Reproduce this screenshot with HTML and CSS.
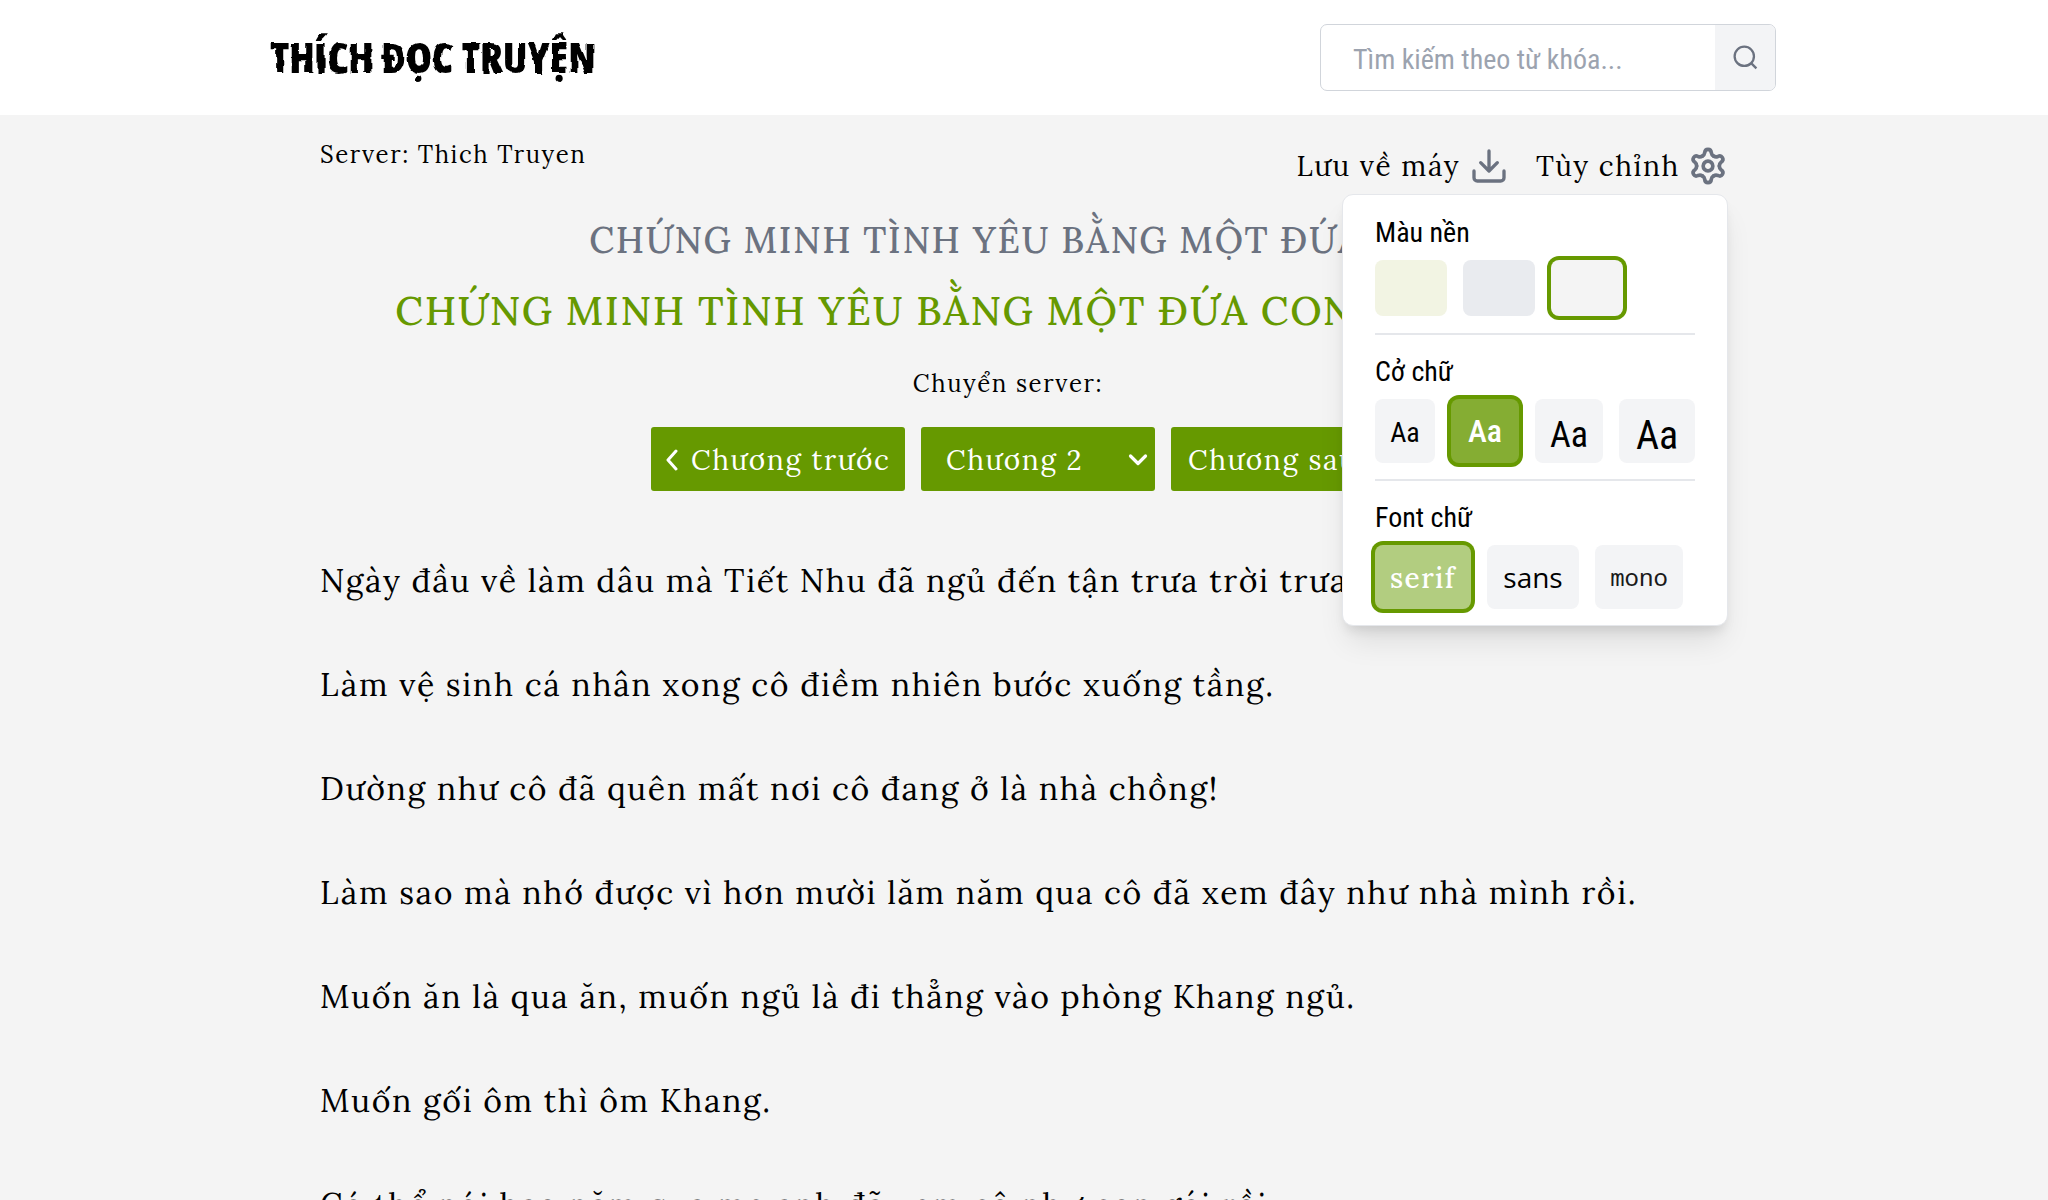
FILE: index.html
```html
<!DOCTYPE html>
<html lang="vi">
<head>
<meta charset="utf-8">
<title>Thích Đọc Truyện</title>
<link rel="stylesheet" href="styles.css">
</head>
<body>
<svg class="defs" width="0" height="0"><filter id="brush"><feTurbulence type="fractalNoise" baseFrequency="0.07" numOctaves="2" seed="4"/><feDisplacementMap in="SourceGraphic" scale="5" xChannelSelector="R" yChannelSelector="G"/></filter></svg>
<header class="header">
  <div class="header-inner">
    <a class="logo">THÍCH ĐỌC TRUYỆN</a>
    <form class="search">
      <span class="search-text">Tìm kiếm theo từ khóa...</span>
      <span class="search-btn">
        <svg width="29" height="29" viewBox="0 0 24 24" fill="none" stroke="currentColor" stroke-width="1.9"><circle cx="11" cy="11" r="8"/><path d="M21 21l-4.35-4.35"/></svg>
      </span>
    </form>
  </div>
</header>
<main class="reader">
  <div class="toolbar">
    <span class="server">Server: Thich Truyen</span>
    <div class="tools">
      <span class="tool">Lưu về máy
        <svg width="40" height="40" viewBox="0 0 24 24" fill="none" stroke="currentColor" stroke-width="2" stroke-linecap="round" stroke-linejoin="round"><path d="M21 15v4a2 2 0 0 1-2 2H5a2 2 0 0 1-2-2v-4"/><path d="M7 10l5 5 5-5M12 15V3"/></svg>
      </span>
      <span class="tool">Tùy chỉnh
        <svg width="40" height="40" viewBox="-12 -12 24 24" fill="none" stroke="currentColor" stroke-width="2.2" stroke-linecap="round" stroke-linejoin="round"><circle r="2.9"/><path id="tooth" d="M-3.4-5.890C-2.500-6.400-2.100-7.100-2-7.900C-1.900-9.300-1.300-10 0-10C1.300-10 1.900-9.300 2-7.900C2.100-7.100 2.500-6.400 3.400-5.890"/><use href="#tooth" transform="rotate(60)"/><use href="#tooth" transform="rotate(120)"/><use href="#tooth" transform="rotate(180)"/><use href="#tooth" transform="rotate(240)"/><use href="#tooth" transform="rotate(300)"/></svg>
      </span>
      <div class="panel">
        <h3>Màu nền</h3>
        <div class="row">
          <i class="swatch cream"></i><i class="swatch slate"></i><i class="swatch light active"></i>
        </div>
        <hr>
        <h3>Cở chữ</h3>
        <div class="row">
          <span class="opt s1">Aa</span><span class="opt s2 active">Aa</span><span class="opt s3">Aa</span><span class="opt s4">Aa</span>
        </div>
        <hr>
        <h3>Font chữ</h3>
        <div class="row">
          <span class="opt serif active">serif</span><span class="opt sans">sans</span><span class="opt mono">mono</span>
        </div>
      </div>
    </div>
  </div>
  <h1>CHỨNG MINH TÌNH YÊU BẰNG MỘT ĐỨA CON</h1>
  <h2>CHỨNG MINH TÌNH YÊU BẰNG MỘT ĐỨA CON — CHƯƠNG 2:</h2>
  <div class="switch">Chuyển server:</div>
  <nav class="chapters">
    <a class="btn prev"><svg width="14" height="22" viewBox="0 0 14 22" fill="none" stroke="currentColor" stroke-width="3" stroke-linecap="round" stroke-linejoin="round"><path d="M11 2L3 11l8 9"/></svg>Chương trước</a>
    <a class="btn select">Chương 2<svg width="20" height="14" viewBox="0 0 20 14" fill="none" stroke="currentColor" stroke-width="3.2" stroke-linecap="round" stroke-linejoin="round"><path d="M2.500 3L10 10.500 17.500 3"/></svg></a>
    <a class="btn next">Chương sau<svg width="14" height="22" viewBox="0 0 14 22" fill="none" stroke="currentColor" stroke-width="3" stroke-linecap="round" stroke-linejoin="round"><path d="M3 2l8 9-8 9"/></svg></a>
  </nav>
  <article class="story">
    <p>Ngày đầu về làm dâu mà Tiết Nhu đã ngủ đến tận trưa trời trưa trật.</p>
    <p>Làm vệ sinh cá nhân xong cô điềm nhiên bước xuống tầng.</p>
    <p>Dường như cô đã quên mất nơi cô đang ở là nhà chồng!</p>
    <p>Làm sao mà nhớ được vì hơn mười lăm năm qua cô đã xem đây như nhà mình rồi.</p>
    <p>Muốn ăn là qua ăn, muốn ngủ là đi thẳng vào phòng Khang ngủ.</p>
    <p>Muốn gối ôm thì ôm Khang.</p>
    <p>Có thể nói bao năm qua mẹ anh đã xem cô như con gái rồi.</p>
  </article>
</main>
</body>
</html>
```
FILE: styles.css
```css
* { box-sizing: border-box; }
body {
  margin: 0;
  height: 1200px;
  overflow: hidden;
  background: #f4f4f4;
  color: #000;
  font-family: Lora, "Liberation Serif", serif;
}
.defs { position: absolute; }
.header { height: 115px; background: #fff; }
.header-inner {
  width: 1506px;
  height: 115px;
  margin: 0 auto;
  display: flex;
  justify-content: space-between;
  align-items: center;
}
.logo {
  font: 800 42px/60px "Open Sans", sans-serif;
  font-stretch: 75%;
  padding-bottom: 2px;
  margin-left: -1px;
  filter: url(#brush);
}
.search {
  display: flex;
  width: 456px;
  height: 67px;
  margin-right: 1px;
  border: 1px solid #d1d5db;
  border-radius: 7px;
  overflow: hidden;
  color: #9ca3af;
  font: 28px/67px "Roboto Condensed", sans-serif;
}
.search-text { flex: 1; padding-left: 32px; padding-top: 1px; }
.search-btn {
  width: 60px;
  background: #f3f4f6;
  color: #6b7280;
  display: flex;
  align-items: center;
  justify-content: center;
}
.reader { width: 1408px; margin: 0 auto; padding-top: 23px; }
.toolbar { display: flex; justify-content: space-between; height: 48px; }
.server { font-size: 24px; line-height: 34px; letter-spacing: 1.6px; }
.tools {
  position: relative;
  display: flex;
  gap: 27px;
  height: 40px;
  margin-top: 8px;
  font-size: 28px;
  line-height: 40px;
  letter-spacing: 1.6px;
}
.tool { display: flex; gap: 9px; }
.tool svg { color: #6b7280; }
.tool + .tool { gap: 8px; }
.panel {
  position: absolute;
  top: 48px;
  right: 0;
  width: 386px;
  height: 432px;
  padding: 20px 32px;
  background: #fff;
  border: 1px solid #e5e7eb;
  border-radius: 11px;
  box-shadow: 0 20px 30px -6px rgba(0,0,0,.1), 0 8px 12px -4px rgba(0,0,0,.1);
  letter-spacing: 0;
}
.panel h3 { margin: 0; font: 400 28px/36px "Roboto Condensed", sans-serif; }
.panel hr { height: 2px; border: 0; margin: 17px 0 19px; background: #e5e7eb; }
.panel .row + hr ~ .row + hr { margin: 16px 0 19px; }
.row { display: flex; gap: 16px; margin-top: 9px; }
.swatch { width: 72px; height: 56px; border-radius: 8px; }
.cream { background: #f2f4e3; }
.slate { background: #e9ebef; }
.light { background: #f4f4f4; }
.active { box-shadow: 0 0 0 4px #690; }
.opt {
  height: 64px;
  border-radius: 8px;
  background: #f3f4f6;
  text-align: center;
  line-height: 67px;
  font-family: "Roboto Condensed", sans-serif;
}
.s1 { width: 60px; font-size: 28px; }
.s2 { width: 68px; font-size: 32px; font-weight: 500; line-height: 64px; background: #85ad33; color: #fff; }
.s3 { width: 68px; font-size: 36px; line-height: 73px; }
.s4 { width: 76px; font-size: 40px; line-height: 73px; }
.serif { width: 96px; font: 500 28px/67px Lora, serif; letter-spacing: 1.4px; background: #b2cd80; color: #fff; }
.sans { width: 92px; font: 400 28px/65px "Open Sans", sans-serif; }
.mono { width: 88px; font: 400 24px/64px "Noto Sans Mono", "Liberation Mono", monospace; color: #1a1a1a; }
h1, h2 { margin: 0; font-weight: 500; text-align: center; white-space: nowrap; }
h1 { margin-top: 32px; font-size: 36px; line-height: 44px; color: #6b7280; letter-spacing: 1.6px; }
h2 { margin-top: 24px; font-size: 40px; line-height: 50px; color: #690; letter-spacing: 1.6px; }
.switch {
  margin: 31px 32px 0 0;
  text-align: center;
  font-size: 24px;
  line-height: 34px;
  letter-spacing: 1.6px;
}
.chapters { display: flex; justify-content: center; gap: 16px; margin-top: 26px; }
.btn {
  display: flex;
  align-items: center;
  height: 64px;
  padding-top: 1px;
  border-radius: 3px;
  background: #690;
  color: #fff;
  font-size: 28px;
  line-height: 66px;
  letter-spacing: 1.6px;
  white-space: nowrap;
}
.prev { width: 254px; padding-left: 14px; gap: 12px; }
.select { width: 234px; padding: 1px 7px 0 25px; justify-content: space-between; }
.next { width: 226px; padding-left: 17px; gap: 11px; }
.story { padding-top: 64px; }
.story p { margin: 0 0 52px; font-size: 32px; line-height: 52px; letter-spacing: 1.6px; white-space: nowrap; }
```
